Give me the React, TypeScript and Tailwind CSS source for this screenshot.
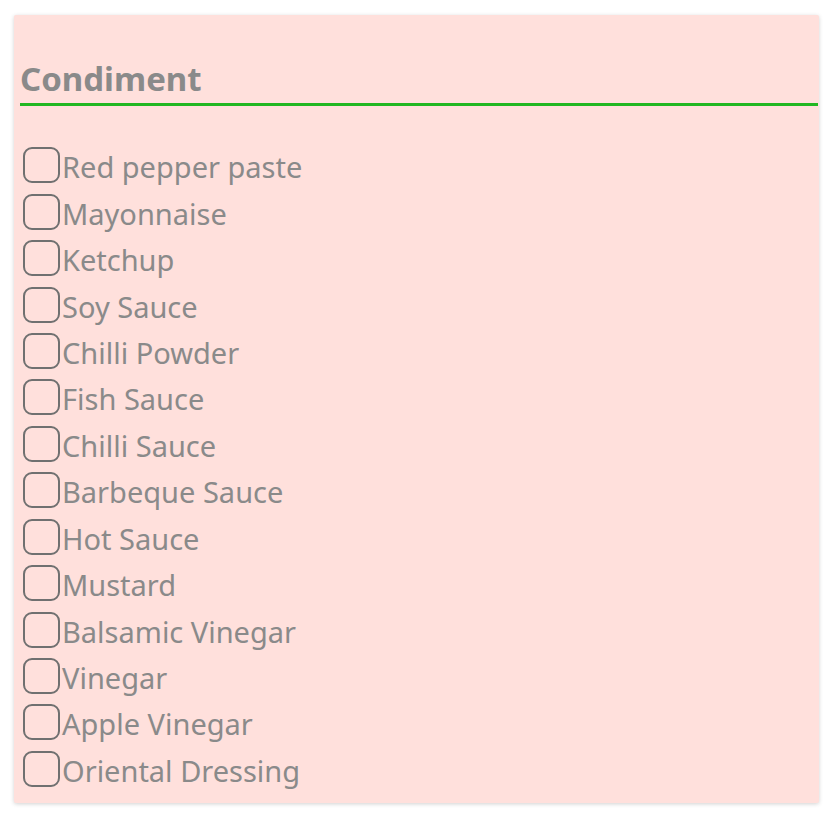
import React from "react";

const items = [
  "Red pepper paste",
  "Mayonnaise",
  "Ketchup",
  "Soy Sauce",
  "Chilli Powder",
  "Fish Sauce",
  "Chilli Sauce",
  "Barbeque Sauce",
  "Hot Sauce",
  "Mustard",
  "Balsamic Vinegar",
  "Vinegar",
  "Apple Vinegar",
  "Oriental Dressing",
];

export default function App() {
  return (
    <div className="min-h-[818px] w-[834px] bg-white pt-[15px] pl-[14px]" style={{ fontFamily: '"Noto Sans", sans-serif' }}>
      <div className="w-[805px] h-[788px] bg-[#ffe0dc] rounded-[2px] shadow-[0_1px_4px_rgba(0,0,0,0.18)] pl-[6px] pr-[1px]">
        <div className="pt-[44px] border-b-[3px] border-[#22b722] h-[91px]">
          <h2 className="text-[33px] leading-[40px] font-bold text-[#8a8a8a]">Condiment</h2>
        </div>
        <div className="pt-[36px] pl-[3px]">
          {items.map((it) => (
            <label key={it} className="flex items-center h-[46.45px]">
              <span className="w-[37px] h-[36px] rounded-[9px] border-2 border-[#707070] shrink-0" />
              <span className="text-[29px] leading-[36px] pt-[4px] text-[#8a8a8a] ml-[2px]">{it}</span>
            </label>
          ))}
        </div>
      </div>
    </div>
  );
}
